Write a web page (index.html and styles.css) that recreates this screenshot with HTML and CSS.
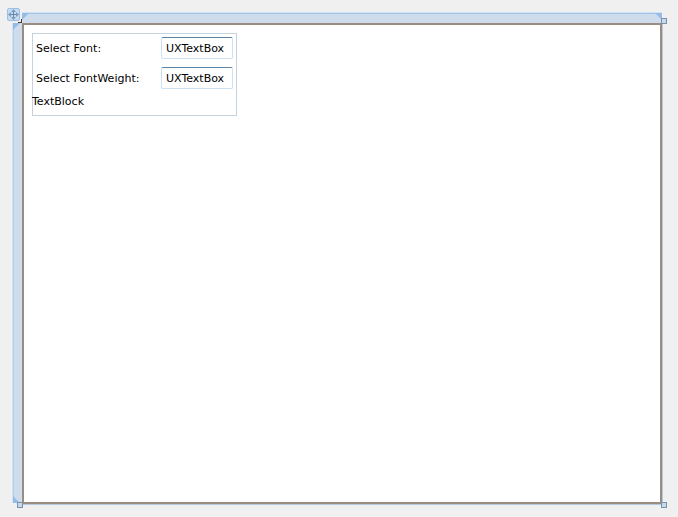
FILE: index.html
```html
<!DOCTYPE html>
<html lang="en">
<head>
	<meta charset="utf-8">
	<title>Designer</title>
	<link rel="stylesheet" href="styles.css">
</head>

<body>
<div class="designer">
	<div class="rail-top">
		<svg class="corner" width="7" height="7"><path d="M0 0H7L0 7Z" fill="#96bbe6"/></svg>
		<svg class="corner" width="7" height="7"><path d="M0 0H7V7Z" fill="#96bbe6"/></svg>
	</div>
	<div class="rail-left">
		<svg class="corner" width="7" height="7"><path d="M0 0H7L0 7Z" fill="#96bbe6"/></svg>
		<svg class="corner" width="7" height="7"><path d="M0 0L7 7H0Z" fill="#96bbe6"/></svg>
	</div>
	<div class="canvas">
		<form class="panel">
			<div class="row">
				<label for="font">Select Font:</label>
				<input type="text" id="font" class="box" value="UXTextBox">
			</div>
			<div class="row">
				<label for="weight">Select FontWeight:</label>
				<input type="text" id="weight" class="box" value="UXTextBox">
			</div>
			<p class="block">TextBlock</p>
		</form>
	</div>
	<button type="button" class="move" aria-label="Move">
		<svg width="13" height="13" viewBox="0 0 13 13">
			<rect x="0.5" y="0.5" width="12" height="12" rx="1.5" fill="#c5dbf2" stroke="#9dbfe4"/>
			<path d="M6.5 2V11M2 6.5H11" fill="none" stroke="#6584a8"/>
			<path d="M6.5 1L9 4H4ZM6.5 12L9 9H4ZM1 6.5L4 4V9ZM12 6.5L9 4V9Z" fill="#7d9abb"/>
		</svg>
	</button>
	<span class="tick"></span>
	<span class="handle handle-ne"></span>
	<span class="handle handle-sw"></span>
	<span class="handle handle-se"></span>
</div>
</body>
</html>
```

FILE: styles.css
```css
* {
	box-sizing: border-box;
}
body {
	margin: 0;
	background-color: #f0f0f0;
	font-family: Verdana, "DejaVu Sans", sans-serif;
	font-size: 11px;
	color: #000;
}
.designer {
	position: relative;
	display: grid;
	grid-template-columns: 10px 1fr;
	grid-template-rows: 11px 1fr;
	min-height: 100vh;
	padding: 12px 15px 13px 12px;
}
.rail-top {
	grid-column: 2;
	display: flex;
	justify-content: space-between;
	margin-right: 1px;
	background-color: #cfdcec;
	border-top: 1px solid #d3e2f3;
	box-shadow: inset 0 1px 0 #a3c3e8;
}
.rail-left {
	grid-column: 1;
	display: flex;
	flex-direction: column;
	justify-content: space-between;
	margin-bottom: 1px;
	background-color: #cfdcec;
	border-left: 1px solid #d3e2f3;
	box-shadow: inset 1px 0 0 #b0cff2;
}
.corner {
	display: block;
}
.canvas {
	margin: 0 1px 0 0;
	padding: 8px;
	background-color: #fff;
	border: 2px solid #9a8c7e;
	box-shadow: 1px 1px 0 #b4c8de;
}
.panel {
	width: 205px;
	height: 83px;
	border: 1px solid #c5d3de;
}
.row {
	display: flex;
	align-items: center;
	justify-content: space-between;
	height: 28px;
	margin-bottom: 2px;
	padding: 0 3px;
}
.box {
	width: 72px;
	height: 22px;
	padding: 0 4px;
	border: 1px solid #cde0f2;
	border-top-color: #5c84a8;
	border-radius: 2px;
	background-color: #fff;
	font: inherit;
	color: inherit;
}
.block {
	margin: 0 0 0 -1px;
	line-height: 16px;
}
.move {
	position: absolute;
	left: 7px;
	top: 8px;
	padding: 0;
	border: 0;
	background: none;
}
.move svg {
	display: block;
}
.tick {
	position: absolute;
	left: 18px;
	top: 19px;
	width: 4px;
	height: 4px;
	border-right: 1px solid #4b3a2a;
	border-bottom: 1px solid #4b3a2a;
}
.handle {
	position: absolute;
	width: 6px;
	height: 6px;
	border: 1px solid #7592b1;
	background-color: #c8d8e4;
}
.handle-ne {
	right: 11px;
	top: 18px;
}
.handle-sw {
	left: 17px;
	bottom: 9px;
}
.handle-se {
	right: 11px;
	bottom: 9px;
}
```
